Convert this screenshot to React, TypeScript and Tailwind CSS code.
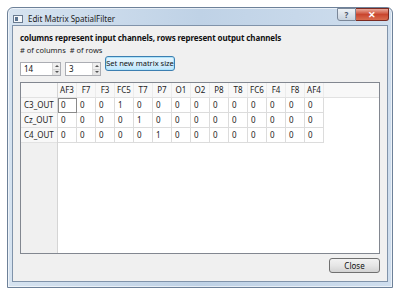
import React from 'react';

const cols = ['AF3', 'F7', 'F3', 'FC5', 'T7', 'P7', 'O1', 'O2', 'P8', 'T8', 'FC6', 'F4', 'F8', 'AF4'];
const rows = [
  { name: 'C3_OUT', one: 3 },
  { name: 'Cz_OUT', one: 4 },
  { name: 'C4_OUT', one: 5 },
];

const SpinBox = ({ value, width }: { value: string; width: string }) => (
  <div className={`flex h-[14px] ${width} border border-[#abadb3] bg-white`}>
    <span className="flex-1 pl-[3px] text-[8px] leading-[12px] text-[#111]">{value}</span>
    <div className="flex w-[8px] flex-col border-l border-[#d5d5d5]">
      <div className="flex flex-1 items-center justify-center bg-[#eeeeee] border-b border-[#d5d5d5]">
        <div className="h-0 w-0 border-x-[2px] border-b-[2px] border-x-transparent border-b-[#555]" />
      </div>
      <div className="flex flex-1 items-center justify-center bg-[#e6e6e6]">
        <div className="h-0 w-0 border-x-[2px] border-t-[2px] border-x-transparent border-t-[#555]" />
      </div>
    </div>
  </div>
);

const App = () => {
  return (
    <div
      className="h-[295px] w-[399px] overflow-hidden bg-white pl-[7px] pt-[7px]"
      style={{ fontFamily: '"Noto Sans", "Open Sans", sans-serif' }}
    >
      <div className="flex h-[281px] w-[386px] flex-col rounded-t-[6px] border border-[#6d8199] bg-gradient-to-r from-[#d6e3f0] via-[#bfd2e6] to-[#cfdeee] shadow-[inset_0_0_0_1px_rgba(255,255,255,0.6)]">
        {/* title bar */}
        <div className="flex h-[22px] items-start justify-between pl-[5px]">
          <div className="flex items-center gap-[5px] pt-[5px]">
            <div className="flex h-[8px] w-[10px] items-center border border-[#6a7b90] bg-[#f4f7fa]">
              <div className="ml-[1px] h-[4px] w-[3px] bg-[#5a7390]" />
            </div>
            <span className="text-[8px] leading-[12px] text-[#1c1c1c]">Edit Matrix SpatialFilter</span>
          </div>
          <div className="flex pr-[3px]">
            <div className="flex h-[13px] w-[19px] items-center justify-center rounded-bl-[3px] border border-[#7a8799] bg-gradient-to-b from-[#eef2f6] to-[#c7d2de] text-[8px] font-bold leading-none text-[#4a5668]">
              ?
            </div>
            <div className="flex h-[13px] w-[33px] items-center justify-center rounded-br-[3px] border border-l-0 border-[#7a2a22] bg-gradient-to-b from-[#e9a99b] via-[#c9462f] to-[#d96c4f] text-[9px] font-bold leading-none text-white">
              ✕
            </div>
          </div>
        </div>

        {/* client area */}
        <div className="mx-[4px] mb-[5px] flex flex-1 flex-col border border-[#8093aa] bg-[#f0f0f0] px-[7px] pt-[6px] pb-[8px]">
          <div className="whitespace-nowrap text-[8px] font-bold leading-[12px] tracking-[-0.1px] text-[#111]">
            columns represent input channels, rows represent output channels
          </div>
          <div className="mt-[1px] whitespace-nowrap text-[7.5px] leading-[11px] text-[#222]">
            # of columns &nbsp;# of rows
          </div>
          <div className="flex items-start gap-[4px]">
            <div className="mt-[6px]">
              <SpinBox value="14" width="w-[41px]" />
            </div>
            <div className="mt-[6px]">
              <SpinBox value="3" width="w-[36px]" />
            </div>
            <div className="flex h-[15px] w-[70px] items-center justify-center whitespace-nowrap rounded-[3px] border border-[#3c7fb1] bg-gradient-to-b from-[#eaf6fd] to-[#bee6fd] text-[7.5px] leading-none text-[#111] shadow-[inset_0_0_0_1px_#aee3f9]">
              Set new matrix size
            </div>
          </div>

          {/* table */}
          <div className="mt-[6px] flex h-[172px] border border-[#828790] bg-white text-[8px] text-[#222]">
            <div className="flex w-[37px] flex-col border-r border-[#d5d5d5] bg-[#f0f0f0]">
              <div className="h-[15px] border-b border-[#e2e2e2] bg-[#f8f8f8]" />
              {rows.map((r) => (
                <div key={r.name} className="flex h-[15px] items-center border-b border-[#e2e2e2] bg-[#f8f8f8] pl-[3px]">
                  {r.name}
                </div>
              ))}
            </div>
            <div className="flex flex-1 flex-col">
              <div className="flex h-[15px] border-b border-[#e2e2e2] bg-[#f8f8f8]">
                {cols.map((c) => (
                  <div key={c} className="flex w-[19px] items-center justify-center border-r border-[#ececec]">
                    {c}
                  </div>
                ))}
              </div>
              {rows.map((r, ri) => (
                <div key={r.name} className="flex h-[15px]">
                  {cols.map((c, ci) => (
                    <div
                      key={c}
                      className={`flex w-[19px] items-center border-r border-b border-[#dcdcdc] pl-[3px] ${
                        ri === 0 && ci === 0 ? 'outline outline-1 -outline-offset-1 outline-[#8a8a8a]' : ''
                      }`}
                    >
                      {ci === r.one ? '1' : '0'}
                    </div>
                  ))}
                </div>
              ))}
            </div>
          </div>

          <div className="mt-[4px] flex justify-end">
            <div className="flex h-[15px] w-[51px] items-center justify-center rounded-[3px] border border-[#707070] bg-gradient-to-b from-[#f2f2f2] via-[#e6e6e6] to-[#d3d3d3] text-[8px] leading-none text-[#111]">
              Close
            </div>
          </div>
        </div>
      </div>
    </div>
  );
};

export default App;
